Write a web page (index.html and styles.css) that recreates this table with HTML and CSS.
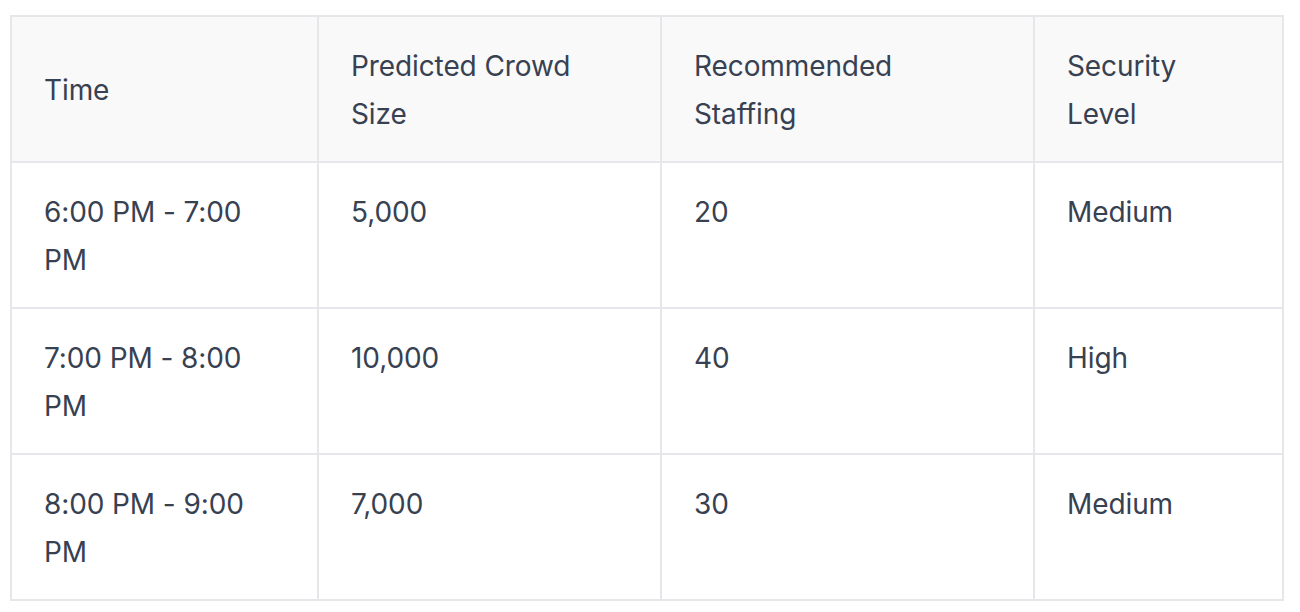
FILE: index.html
```html
<!DOCTYPE html>
<html>
<head>
<meta charset="utf-8">
<link rel="stylesheet" href="styles.css">
</head>
<body>
<div class="wrap">
<table class="grid">
<colgroup>
<col class="c1"><col class="c2"><col class="c3"><col class="c4">
</colgroup>
<thead>
<tr><th>Time</th><th>Predicted Crowd Size</th><th>Recommended Staffing</th><th>Security Level</th></tr>
</thead>
<tbody>
<tr><td>6:00 PM - 7:00 PM</td><td>5,000</td><td>20</td><td>Medium</td></tr>
<tr><td>7:00 PM - 8:00 PM</td><td>10,000</td><td>40</td><td>High</td></tr>
<tr><td>8:00 PM - 9:00 PM</td><td>7,000</td><td>30</td><td>Medium</td></tr>
</tbody>
</table>
</div>
</body>
</html>
```
FILE: styles.css
```css
html, body { margin: 0; padding: 0; background: #ffffff; }
.wrap { padding: 15px 0 0 10px; }
.grid {
  border-collapse: collapse;
  table-layout: fixed;
  width: 1274px;
  font-family: Inter, "Liberation Sans", sans-serif;
  font-size: 28px;
  letter-spacing: -0.1px;
  line-height: 48px;
  color: #374151;
}
.c1 { width: 307px; }
.c2 { width: 343px; }
.c3 { width: 373px; }
.c4 { width: 249px; }
.grid th, .grid td {
  border: 2px solid #e5e7eb;
  padding: 24.5px 32px 23.5px 32px;
  text-align: left;
  vertical-align: top;
  font-weight: 400;
}
.grid thead th { background: #f9f9fa; vertical-align: middle; }
.grid .wrapcell { word-spacing: 0; }
.grid td { height: 96px; }
```
